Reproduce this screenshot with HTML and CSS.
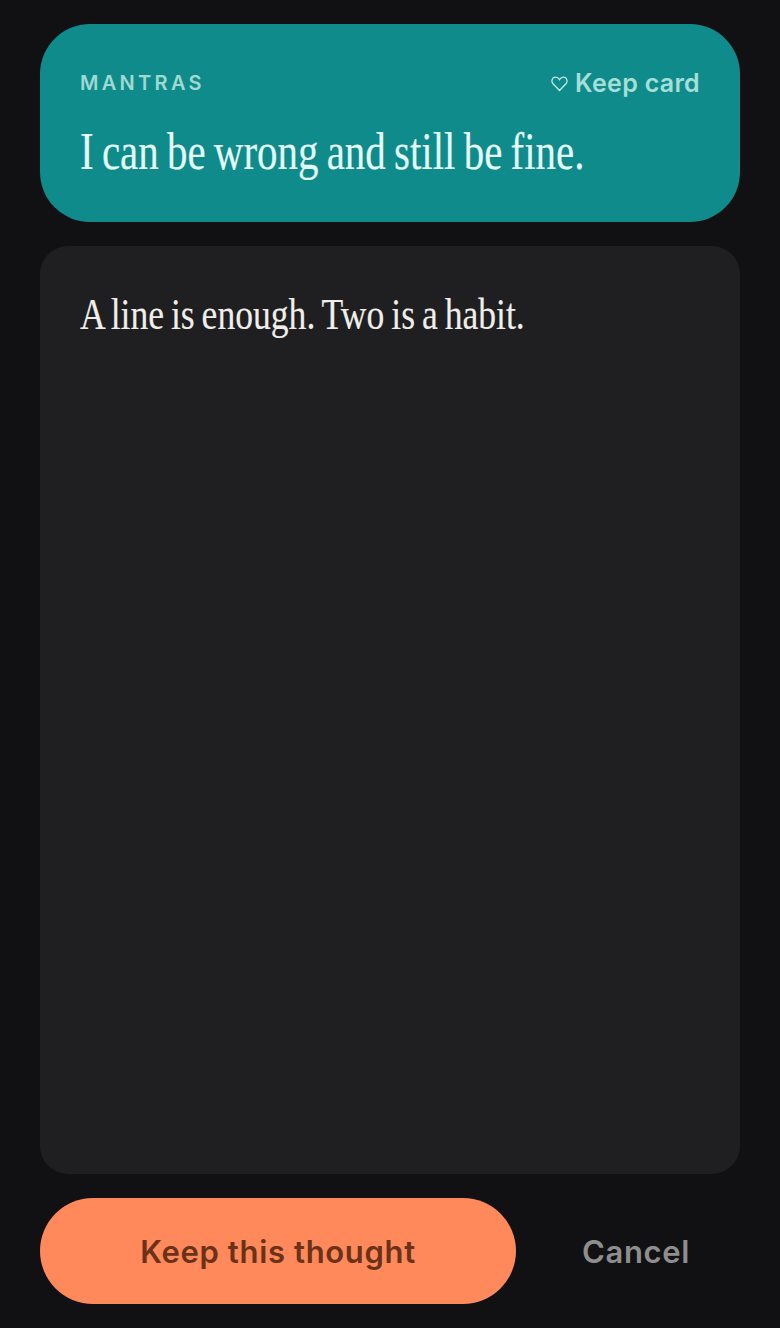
FILE: index.html
```html
<!DOCTYPE html>
<html lang="en">
<head>
    <meta charset="UTF-8">
    <title>Keep this thought</title>
    <link rel="stylesheet" href="styles.css">
</head>
<body>
    <div class="screen">
        <div class="prompt-card">
            <div class="prompt-top">
                <span class="deck-name">MANTRAS</span>
                <span class="keep-card">
                    <svg class="heart" viewBox="0 0 16 16" width="17" height="17">
                        <path d="M8 14.6 L1.9 8.2 C0 6 0.9 2.2 4.1 2 C5.8 1.9 7.2 2.9 8 4.4 C8.8 2.9 10.2 1.9 11.9 2 C15.1 2.2 16 6 14.1 8.2 Z"/>
                    </svg>
                    Keep card
                </span>
            </div>
            <p class="prompt-text">I can be wrong and still be fine.</p>
        </div>

        <div class="entry-card">
            <p class="entry-text">A line is enough. Two is a habit.</p>
        </div>

        <div class="actions">
            <button class="save-btn">Keep this thought</button>
            <button class="cancel-btn">Cancel</button>
        </div>
    </div>
</body>
</html>
```

FILE: styles.css
```css
* {
    box-sizing: border-box;
}

body {
    margin: 0;
    background-color: #111113;
}

.screen {
    height: 1328px;
    padding: 24px 40px;
    display: flex;
    flex-direction: column;
    gap: 24px;
    font-family: Inter, sans-serif;
}

.prompt-card {
    height: 198px;
    padding: 46px 40px 0;
    background-color: #108b8c;
    border-radius: 50px;
}

.prompt-top {
    display: flex;
    justify-content: space-between;
    align-items: center;
    height: 26px;
}

.deck-name {
    font-size: 20px;
    font-weight: 600;
    letter-spacing: 3.3px;
    color: #9fd9d1;
}

.keep-card {
    display: flex;
    align-items: center;
    gap: 7px;
    font-size: 25px;
    font-weight: 600;
    letter-spacing: 0.3px;
    color: #a5dfd7;
}

.heart {
    fill: none;
    stroke: #c5ece6;
    stroke-width: 1.2;
}

/* the serif has no condensed cut here, so it is narrowed by hand */
.prompt-text,
.entry-text {
    margin: 0;
    font-family: "Liberation Serif", serif;
    line-height: 60px;
    white-space: nowrap;
    word-spacing: -2.5px;
    -webkit-text-stroke: 0.15px;
    transform-origin: left center;
}

.prompt-text {
    margin-top: 26px;
    font-size: 52px;
    transform: scaleX(0.787);
    color: #e4fbf7;
}

.entry-card {
    flex: 1;
    padding: 38px 40px 40px;
    background-color: #1f1f21;
    border-radius: 28px;
}

.entry-text {
    font-size: 45px;
    transform: scaleX(0.791);
    color: #f0eeea;
}

.actions {
    display: flex;
    align-items: center;
    height: 106px;
}

.save-btn {
    width: 476px;
    height: 106px;
    border: none;
    border-radius: 53px;
    background-color: #ff895a;
    color: #6b3219;
    font-family: Inter, sans-serif;
    font-size: 31px;
    font-weight: 600;
    letter-spacing: 0.65px;
}

.cancel-btn {
    flex: 1;
    border: none;
    background: none;
    color: #8e8e8e;
    font-family: Inter, sans-serif;
    font-size: 31px;
    font-weight: 600;
    letter-spacing: 0.65px;
    padding: 0 0 0 16px;
}
```
